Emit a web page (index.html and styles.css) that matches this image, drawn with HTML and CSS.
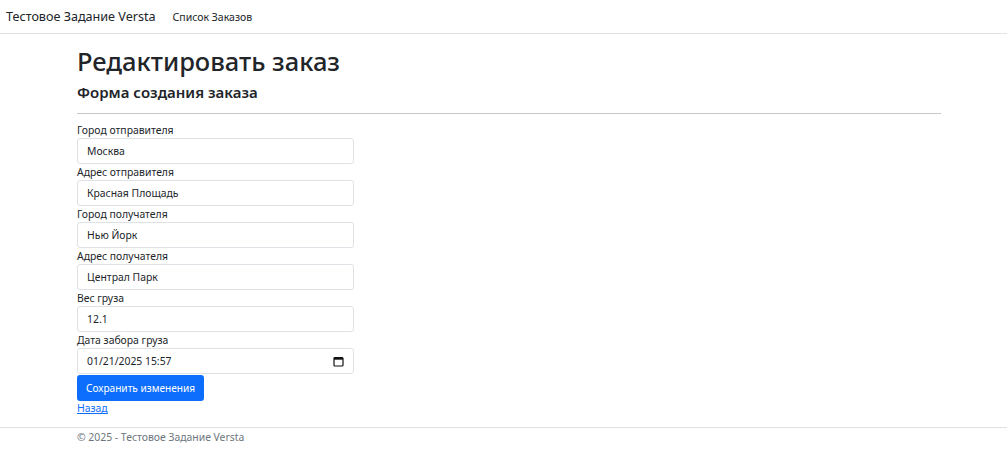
FILE: index.html
```html
<!DOCTYPE html>
<html lang="ru">
<head>
<meta charset="utf-8">
<title>Редактировать заказ</title>
<link rel="stylesheet" href="styles.css">
</head>
<body>
<header class="navbar">
  <a class="brand" href="#">Тестовое Задание Versta</a>
  <a class="nav-link" href="#">Список Заказов</a>
</header>
<main class="container">
  <h1 class="title">Редактировать заказ</h1>
  <h4 class="subtitle">Форма создания заказа</h4>
  <hr class="divider">
  <form class="form">
    <div class="group">
      <label class="label">Город отправителя</label>
      <input class="control" type="text" value="Москва">
    </div>
    <div class="group">
      <label class="label">Адрес отправителя</label>
      <input class="control" type="text" value="Красная Площадь">
    </div>
    <div class="group">
      <label class="label">Город получателя</label>
      <input class="control" type="text" value="Нью Йорк">
    </div>
    <div class="group">
      <label class="label">Адрес получателя</label>
      <input class="control" type="text" value="Централ Парк">
    </div>
    <div class="group">
      <label class="label">Вес груза</label>
      <input class="control narrow-pad" type="text" value="12.1">
    </div>
    <div class="group">
      <label class="label">Дата забора груза</label>
      <div class="date-wrap">
        <input class="control narrow-pad" type="text" value="01/21/2025 15:57">
        <svg class="cal-icon" width="11" height="11" viewBox="0 0 11 11"><rect x="1" y="1.5" width="9" height="8.5" rx="1" fill="none" stroke="#111" stroke-width="1.2"/><rect x="1" y="1.5" width="9" height="2.2" fill="#111"/></svg>
      </div>
    </div>
    <button class="btn" type="button">Сохранить изменения</button>
  </form>
  <a class="back" href="#">Назад</a>
</main>
<footer class="footer">
  <div class="footer-inner">© 2025 - Тестовое Задание Versta</div>
</footer>
</body>
</html>
```
FILE: styles.css
```css
* { box-sizing: border-box; }
body {
  margin: 0;
  font-family: "Noto Sans", "Open Sans", sans-serif;
  color: #212529;
  background: #fff;
}
.navbar {
  height: 34px;
  border-bottom: 1px solid #e3e3e3;
  display: flex;
  align-items: center;
  padding-left: 6px;
}
.brand {
  font-size: 12.6px;
  color: #212529;
  text-decoration: none;
  margin-right: 17px;
}
.nav-link {
  font-size: 10.5px;
  color: #212529;
  text-decoration: none;
}
.container {
  margin-left: 77px;
  width: 864px;
  padding-top: 11px;
}
.title {
  margin: 0;
  font-size: 25.5px;
  font-weight: 500;
  line-height: 32px;
}
.subtitle {
  margin: 5px 0 0;
  font-size: 15px;
  font-weight: 600;
  line-height: 20px;
}
.divider {
  margin: 11px 0 8px;
  border: 0;
  border-top: 1px solid #c8c8c8;
}
.group {
  display: flex;
  flex-direction: column;
  width: 277px;
}
.label {
  font-size: 10.4px;
  line-height: 16px;
}
.control {
  width: 277px;
  height: 26px;
  border: 1px solid #dee2e6;
  border-radius: 3px;
  padding: 0 9px;
  font-family: inherit;
  font-size: 10.4px;
  color: #212529;
}
.narrow-pad { padding-left: 9px; }
.date-wrap { position: relative; }
.cal-icon { position: absolute; right: 10px; top: 8px; }
.btn {
  margin-top: 1px;
  height: 26px;
  padding: 0 9px;
  background: #0d6efd;
  color: #fff;
  border: 0;
  border-radius: 3px;
  font-family: inherit;
  font-size: 10.1px;
}
.back {
  display: block;
  font-size: 10.4px;
  line-height: 14px;
  color: #0d6efd;
}
.footer {
  margin-top: 12px;
  border-top: 1px solid #dee2e6;
}
.footer-inner {
  margin-left: 77px;
  font-size: 10.4px;
  line-height: 18px;
  color: #6c757d;
}
```
